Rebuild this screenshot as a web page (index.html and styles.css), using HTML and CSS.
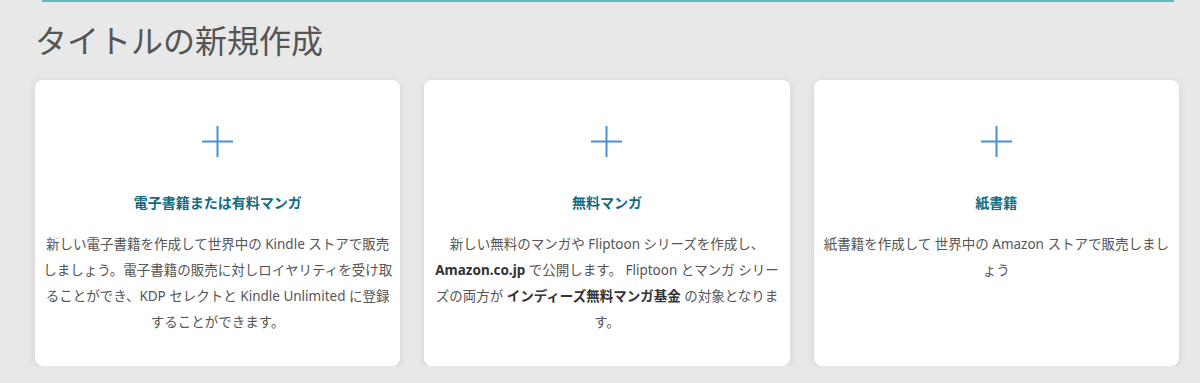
FILE: index.html
```html
<!DOCTYPE html>
<html lang="ja">
<head>
<meta charset="utf-8">
<title>タイトルの新規作成</title>
<link rel="stylesheet" href="styles.css">
</head>
<body>
<div class="topline"></div>
<main class="page">
  <h1 class="title">タイトルの新規作成</h1>
  <div class="cards">
    <section class="card">
      <svg class="plus" width="31" height="31" viewBox="0 0 31 31"><path d="M15.5 0V31M0 15.5H31" stroke="#4a90d9" stroke-width="2" fill="none"/></svg>
      <h2 class="card-title">電子書籍または有料マンガ</h2>
      <p class="card-text">新しい電子書籍を作成して世界中の Kindle ストアで販売<br>しましょう。電子書籍の販売に対しロイヤリティを受け取<br>ることができ、KDP セレクトと Kindle Unlimited に登録<br>することができます。</p>
    </section>
    <section class="card">
      <svg class="plus" width="31" height="31" viewBox="0 0 31 31"><path d="M15.5 0V31M0 15.5H31" stroke="#4a90d9" stroke-width="2" fill="none"/></svg>
      <h2 class="card-title">無料マンガ</h2>
      <p class="card-text">新しい無料のマンガや Fliptoon シリーズを作成し、<br><b>Amazon.co.jp</b> で公開します。 Fliptoon とマンガ シリー<br>ズの両方が <b>インディーズ無料マンガ基金</b> の対象となりま<br>す。</p>
    </section>
    <section class="card">
      <svg class="plus" width="31" height="31" viewBox="0 0 31 31"><path d="M15.5 0V31M0 15.5H31" stroke="#4a90d9" stroke-width="2" fill="none"/></svg>
      <h2 class="card-title">紙書籍</h2>
      <p class="card-text">紙書籍を作成して 世界中の Amazon ストアで販売しまし<br>ょう</p>
    </section>
  </div>
</main>
</body>
</html>
```
FILE: styles.css
```css
html, body {
  margin: 0;
  padding: 0;
  background: #e8e8e8;
  font-family: "Noto Sans", "Noto Sans CJK JP", sans-serif;
  overflow: hidden;
}
.topline {
  height: 2px;
  margin: 0 26px 0 42px;
  background: #62bac6;
}
.page {
  padding: 0 21px 0 35px;
}
.title {
  margin: 14px 0 0 0;
  font-size: 32px;
  line-height: 46px;
  font-weight: 400;
  color: #555;
  font-family: "Noto Sans CJK JP", sans-serif;
}
.cards {
  margin-top: 18px;
  display: grid;
  grid-template-columns: repeat(3, 1fr);
  gap: 24px;
}
.card {
  background: #fff;
  border-radius: 8px;
  height: 286px;
  box-sizing: border-box;
  padding: 46px 0 0 0;
  box-shadow: 0 2px 8px rgba(0,0,0,0.10);
  display: flex;
  flex-direction: column;
  align-items: center;
  text-align: center;
}
.plus {
  display: block;
}
.card-title {
  margin: 35px 0 0 0;
  font-size: 14px;
  line-height: 20px;
  font-weight: 700;
  color: #0f6c83;
  font-family: "Noto Sans CJK JP", sans-serif;
}
.card-text {
  margin: 19px 0 0 0;
  font-size: 13.5px;
  line-height: 26px;
  color: #555;
}
.card-text b {
  color: #333;
  font-weight: 700;
}
```
